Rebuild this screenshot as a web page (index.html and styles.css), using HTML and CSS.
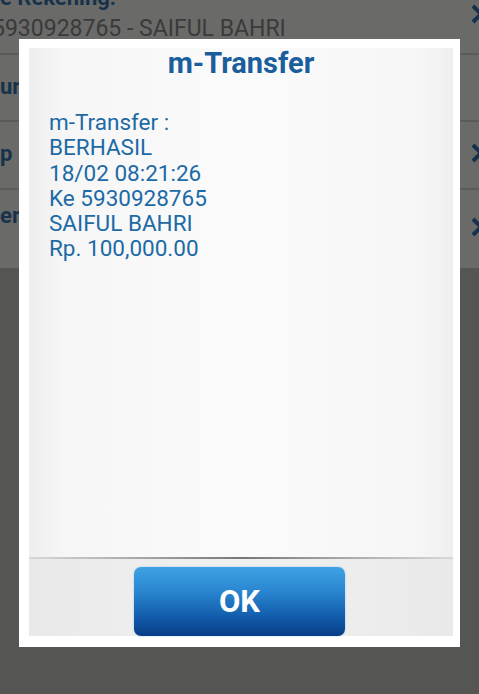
FILE: index.html
```html
<!DOCTYPE html>
<html>
<head>
<meta charset="utf-8">
<link rel="stylesheet" href="styles.css">
</head>
<body>
<div class="page">
  <div class="rows">
    <div class="row row-first">
      <div class="label label-top">e Rekening:</div>
      <div class="value">5930928765 - SAIFUL BAHRI</div>
      <svg class="chev chev-1" width="12" height="20" viewBox="0 0 12 20"><path d="M2 2 L10 10 L2 18" fill="none" stroke="#12324e" stroke-width="4"/></svg>
    </div>
    <div class="row row-2">
      <div class="label">ur</div>
    </div>
    <div class="row row-3">
      <div class="label">p</div>
      <svg class="chev" width="12" height="20" viewBox="0 0 12 20"><path d="M2 2 L10 10 L2 18" fill="none" stroke="#12324e" stroke-width="4"/></svg>
    </div>
    <div class="row row-4">
      <div class="label">er</div>
      <svg class="chev" width="12" height="20" viewBox="0 0 12 20"><path d="M2 2 L10 10 L2 18" fill="none" stroke="#12324e" stroke-width="4"/></svg>
    </div>
  </div>
</div>

<div class="dialog">
  <div class="panel">
    <div class="title">m-Transfer</div>
    <div class="message">
      <div>m-Transfer :</div>
      <div>BERHASIL</div>
      <div>18/02 08:21:26</div>
      <div>Ke 5930928765</div>
      <div>SAIFUL BAHRI</div>
      <div>Rp. 100,000.00</div>
    </div>
    <div class="footer">
      <div class="ok">OK</div>
    </div>
  </div>
</div>
</body>
</html>
```

FILE: styles.css
```css
html, body {
  margin: 0;
  padding: 0;
}
body {
  width: 479px;
  height: 694px;
  overflow: hidden;
  background: #555553;
  font-family: Roboto, "Liberation Sans", sans-serif;
  position: relative;
}
.page {
  width: 479px;
}
.rows {
  background: #6a6a69;
  height: 268px;
  display: flex;
  flex-direction: column;
}
.row {
  position: relative;
  border-bottom: 2px solid #5b5b5a;
  box-sizing: border-box;
  display: flex;
  flex-direction: column;
  justify-content: center;
}
.row-first {
  height: 55px;
  justify-content: flex-start;
}
.row-2 { height: 67px; }
.row-3 { height: 68px; }
.row-4 { height: 78px; border-bottom: none; }
.label {
  font-weight: bold;
  font-size: 22px;
  color: #17324a;
  line-height: 26px;
}
.row-2 .label { margin-top: -2px; }
.row-3 .label { margin-top: -2px; }
.row-4 .label { margin-top: -26px; }
.label-top {
  margin-top: -14px;
  line-height: 24px;
}
.value {
  font-size: 23px;
  color: #3a3a3a;
  line-height: 26px;
  margin-left: -8px;
  margin-top: 6px;
  white-space: nowrap;
}
.chev {
  position: absolute;
  left: 471px;
  top: 50%;
  margin-top: -12px;
}
.chev-1 {
  top: 4px;
  margin-top: 0;
}
.dialog {
  position: absolute;
  left: 19px;
  top: 39px;
  width: 441px;
  height: 608px;
  background: #ffffff;
  box-sizing: border-box;
  padding: 9px 7px 11px 10px;
}
.panel {
  height: 100%;
  display: flex;
  flex-direction: column;
  background: linear-gradient(to right, #eeeeee 0%, #f6f6f6 8%, #fbfbfb 50%, #f6f6f6 92%, #efefef 100%);
}
.title {
  text-align: center;
  font-weight: bold;
  font-size: 29px;
  color: #1a5e9c;
  line-height: 30px;
  height: 48px;
}
.message {
  flex: 1;
  padding-left: 20px;
  padding-top: 14px;
  font-size: 22.5px;
  line-height: 25.3px;
  color: #1c6aa6;
}
.footer {
  height: 79px;
  box-sizing: border-box;
  border-top: 2px solid;
  border-image: linear-gradient(to right, rgba(120,120,120,0.15), #777777 50%, rgba(120,120,120,0.15)) 1;
  display: flex;
  justify-content: center;
  align-items: flex-end;
  background: linear-gradient(to right, #e9e9e9, #f1f1f1 50%, #e9e9e9);
}
.ok {
  width: 211px;
  height: 69px;
  margin-left: -3px;
  border-radius: 7px;
  background: linear-gradient(to bottom, #3fa2e4 0%, #2a86d0 35%, #135fae 70%, #063d86 100%);
  color: #ffffff;
  font-weight: bold;
  font-size: 31px;
  display: flex;
  align-items: center;
  justify-content: center;
  box-shadow: 0 0 2px rgba(120,190,240,0.8);
}
```
